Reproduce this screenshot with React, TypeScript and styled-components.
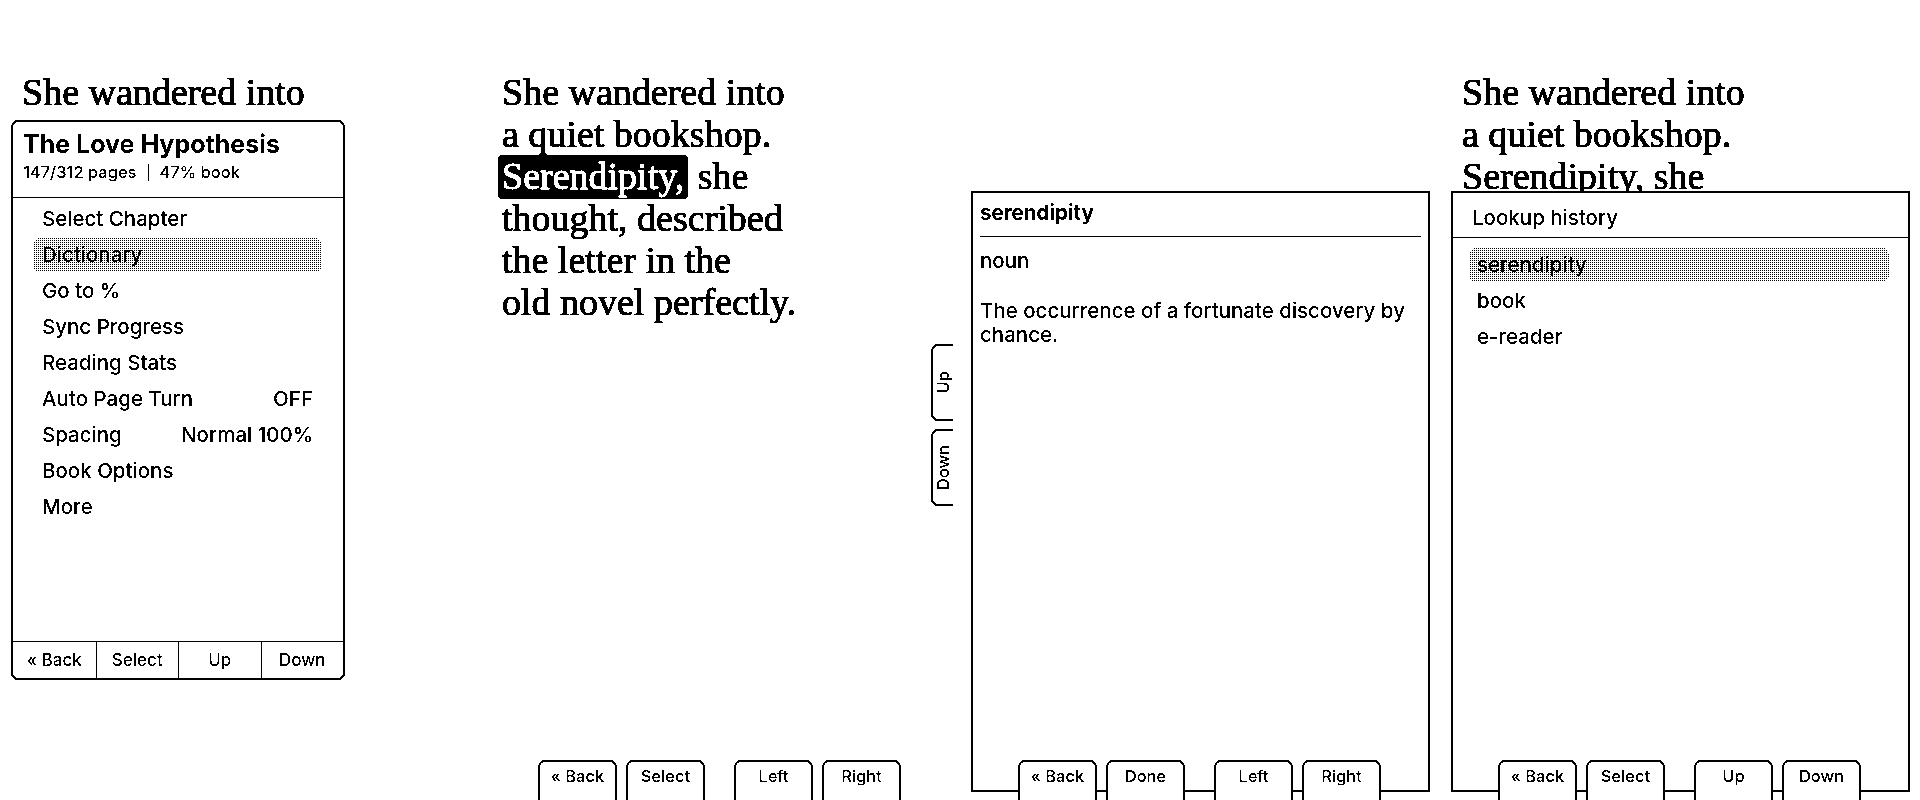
import React from 'react';
import styled, { createGlobalStyle, css } from 'styled-components';

const GlobalStyle = createGlobalStyle`
  html, body {
    margin: 0;
    padding: 0;
    background: #fff;
  }
  body {
    font-family: Inter, "Liberation Sans", sans-serif;
    font-weight: 500;
    color: #000;
  }
`;

// one black dot in every 2x2 cell, as the panel draws its grey
const dither = css`
  background: conic-gradient(#000 0 25%, #fff 0) 0 0 / 2px 2px;
`;

const Screens = styled.main`
  display: flex;
  width: 1920px;
  height: 800px;
  overflow: hidden;
  filter: url(#mono);
`;

const Screen = styled.section`
  position: relative;
  flex: none;
  width: 480px;
  height: 800px;
  display: flex;
  flex-direction: column;
  overflow: hidden;
  background: #fff;
`;

const FilterDefs = styled.svg`
  position: absolute;
  width: 0;
  height: 0;
`;

/* reading page */

const PageText = styled.article`
  padding: 71px 0 0 22px;
  font-family: "Liberation Serif", serif;
  font-weight: 400;
  font-size: 38px;
  line-height: 42px;
  -webkit-text-stroke: 0.9px #000;
`;

const Line = styled.div`
  white-space: nowrap;
`;

const Marked = styled.span`
  display: inline-block;
  height: 44px;
  margin: 0 0 -2px -4px;
  vertical-align: top;
  padding: 0 4px;
  border-radius: 4px;
  background: #000;
  color: #fff;
  -webkit-text-stroke: 0.9px #fff;
`;

/* reader menu */

const MenuPopup = styled.div`
  position: absolute;
  left: 11px;
  top: 120px;
  width: 334px;
  height: 560px;
  box-sizing: border-box;
  border: 2px solid #000;
  border-radius: 7px;
  background: #fff;
  display: flex;
  flex-direction: column;
  overflow: hidden;
`;

const MenuHeader = styled.header`
  padding: 9px 10px 15px;
  border-bottom: 1px solid #000;
`;

const BookTitle = styled.div`
  font-size: 25px;
  font-weight: 700;
  line-height: 26px;
`;

const BookMeta = styled.div`
  margin-top: 5px;
  display: flex;
  align-items: center;
  gap: 11px;
  font-size: 16.5px;
  line-height: 20px;
`;

const MetaDivider = styled.i`
  width: 1px;
  height: 17px;
  background: #000;
`;

const MenuList = styled.ul`
  list-style: none;
  margin: 0;
  padding: 4px 21px 0 20px;
  display: flex;
  flex-direction: column;
  gap: 2px;
`;

const MenuRow = styled.li<{ $active?: boolean }>`
  display: flex;
  justify-content: space-between;
  height: 34px;
  line-height: 34px;
  padding: 0 9px;
  border-radius: 7px;
  font-size: 20.5px;
  ${(p) => p.$active && dither}
`;

const ButtonBar = styled.footer`
  margin-top: auto;
  height: 36px;
  border-top: 1px solid #000;
  display: grid;
  grid-template-columns: repeat(4, 1fr);
`;

const BarButton = styled.div`
  display: flex;
  align-items: center;
  justify-content: center;
  font-size: 17px;
  & + & {
    border-left: 1px solid #000;
  }
`;

/* full-screen dialogs */

const Dialog = styled.div`
  position: absolute;
  left: 11px;
  top: 191px;
  width: 459px;
  height: 601px;
  box-sizing: border-box;
  border: 2px solid #000;
  background: #fff;
`;

const DialogTitle = styled.h2<{ $bold?: boolean; $inset: number; $pad: string }>`
  margin: 0 ${(p) => (p.$bold ? 7 : 0)}px 0;
  padding: ${(p) => p.$pad};
  padding-left: ${(p) => p.$inset}px;
  border-bottom: 1px solid #000;
  font-size: 20.5px;
  line-height: 24px;
  font-weight: ${(p) => (p.$bold ? 700 : 500)};
`;

const DefBody = styled.div`
  padding: 12px 7px 0;
  font-size: 20.5px;
  line-height: 24px;
`;

const Definition = styled.p`
  margin: 26px 0 0;
`;

const HistoryList = styled.ul`
  list-style: none;
  margin: 0;
  padding: 10px 19px 0 16px;
  display: flex;
  flex-direction: column;
  gap: 2px;
`;

const HistoryRow = styled.li<{ $active?: boolean }>`
  height: 34px;
  line-height: 34px;
  padding: 0 8px;
  border-radius: 7px;
  font-size: 20.5px;
  ${(p) => p.$active && dither}
`;

/* hardware button hints */

const TabBar = styled.nav`
  position: relative;
  z-index: 1;
  margin-top: auto;
  height: 40px;
  padding-left: 58px;
  display: flex;
  gap: 29px;
`;

const TabGroup = styled.div`
  display: flex;
  gap: 9px;
`;

const Tab = styled.div`
  width: 79px;
  box-sizing: border-box;
  border: 2px solid #000;
  border-bottom: none;
  border-radius: 7px 7px 0 0;
  background: #fff;
  display: flex;
  justify-content: center;
  padding-top: 3px;
  line-height: 22px;
  font-size: 16.5px;
`;

const SideHints = styled.div`
  position: absolute;
  right: 7px;
  top: 344px;
  display: flex;
  flex-direction: column;
  gap: 8px;
`;

const SideTab = styled.div`
  width: 22px;
  height: 77px;
  box-sizing: border-box;
  border: 2px solid #000;
  border-right: none;
  border-radius: 7px 0 0 7px;
  background: #fff;
  display: flex;
  align-items: center;
  justify-content: center;
  font-size: 16.5px;
  span {
    writing-mode: vertical-rl;
    transform: rotate(180deg);
  }
`;

type Pair = [string, string];

const Hints = ({ left, right }: { left: Pair; right: Pair }) => (
  <TabBar>
    <TabGroup>
      {left.map((t) => (
        <Tab key={t}>{t}</Tab>
      ))}
    </TabGroup>
    <TabGroup>
      {right.map((t) => (
        <Tab key={t}>{t}</Tab>
      ))}
    </TabGroup>
  </TabBar>
);

const pageLines = [
  'She wandered into',
  'a quiet bookshop.',
  'Serendipity, she',
  'thought, described',
  'the letter in the',
  'old novel perfectly.',
];

const Page = ({ marked, lines = pageLines.length }: { marked?: boolean; lines?: number }) => (
  <PageText>
    {pageLines.slice(0, lines).map((l) =>
      marked && l.startsWith('Serendipity,') ? (
        <Line key={l}>
          <Marked>Serendipity,</Marked> she
        </Line>
      ) : (
        <Line key={l}>{l}</Line>
      ),
    )}
  </PageText>
);

const menuItems: { label: string; value?: string }[] = [
  { label: 'Select Chapter' },
  { label: 'Dictionary' },
  { label: 'Go to %' },
  { label: 'Sync Progress' },
  { label: 'Reading Stats' },
  { label: 'Auto Page Turn', value: 'OFF' },
  { label: 'Spacing', value: 'Normal 100%' },
  { label: 'Book Options' },
  { label: 'More' },
];

const history = ['serendipity', 'book', 'e-reader'];

export default function App() {
  return (
    <>
      <GlobalStyle />
      <FilterDefs aria-hidden>
        <filter id="mono" colorInterpolationFilters="sRGB">
          <feColorMatrix type="saturate" values="0" />
          <feComponentTransfer>
            <feFuncR type="discrete" tableValues="0 1" />
            <feFuncG type="discrete" tableValues="0 1" />
            <feFuncB type="discrete" tableValues="0 1" />
          </feComponentTransfer>
        </filter>
      </FilterDefs>
      <Screens>
        <Screen>
          <Page lines={1} />
          <MenuPopup>
            <MenuHeader>
              <BookTitle>The Love Hypothesis</BookTitle>
              <BookMeta>
                <span>147/312 pages</span>
                <MetaDivider />
                <span>47% book</span>
              </BookMeta>
            </MenuHeader>
            <MenuList>
              {menuItems.map((m) => (
                <MenuRow key={m.label} $active={m.label === 'Dictionary'}>
                  <span>{m.label}</span>
                  {m.value && <span>{m.value}</span>}
                </MenuRow>
              ))}
            </MenuList>
            <ButtonBar>
              <BarButton>« Back</BarButton>
              <BarButton>Select</BarButton>
              <BarButton>Up</BarButton>
              <BarButton>Down</BarButton>
            </ButtonBar>
          </MenuPopup>
        </Screen>

        <Screen>
          <Page marked />
          <SideHints>
            <SideTab>
              <span>Up</span>
            </SideTab>
            <SideTab>
              <span>Down</span>
            </SideTab>
          </SideHints>
          <Hints left={['« Back', 'Select']} right={['Left', 'Right']} />
        </Screen>

        <Screen>
          <Dialog>
            <DialogTitle $bold $inset={0} $pad="8px 0 11px">
              serendipity
            </DialogTitle>
            <DefBody>
              <div>noun</div>
              <Definition>The occurrence of a fortunate discovery by chance.</Definition>
            </DefBody>
          </Dialog>
          <Hints left={['« Back', 'Done']} right={['Left', 'Right']} />
        </Screen>

        <Screen>
          <Page lines={3} />
          <Dialog>
            <DialogTitle $inset={19} $pad="13px 0 7px">
              Lookup history
            </DialogTitle>
            <HistoryList>
              {history.map((w, i) => (
                <HistoryRow key={w} $active={i === 0}>
                  {w}
                </HistoryRow>
              ))}
            </HistoryList>
          </Dialog>
          <Hints left={['« Back', 'Select']} right={['Up', 'Down']} />
        </Screen>
      </Screens>
    </>
  );
}
